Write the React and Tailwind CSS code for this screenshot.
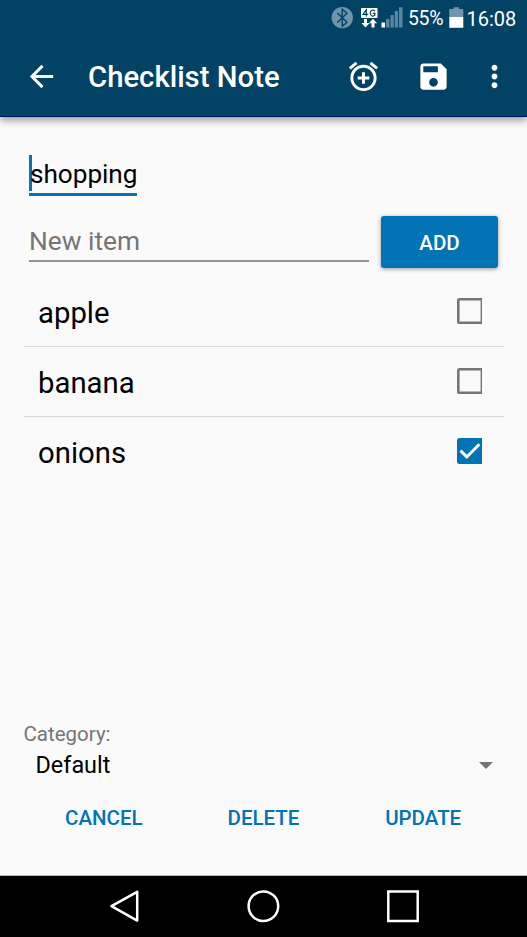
import React from "react";

function StatusBar() {
  return (
    <div className="flex h-9 items-center pl-[331px] text-white">
      <svg className="h-9 w-[76px] shrink-0" viewBox="331 0 76 36" fill="none">
        <circle cx="342.3" cy="17.6" r="10.7" fill="#7095ab" />
        <path d="M337.3 13L347 22.3L342.2 26.2V9.2L347 13.2L337.3 22.5" stroke="#024265" strokeWidth="1.4" />
        <rect x="361" y="8" width="16.5" height="10" rx="0.8" fill="#fff" />
        <path d="M366.3 16.5V9.8L363 14.4H368.2M374.8 11.2C373.8 9.7 370.2 9.6 370.2 13.1C370.2 16.6 373.6 16.6 374.9 15.2V13.3H372.6" stroke="#024265" strokeWidth="1.2" />
        <path d="M364 19H367V23H369.6L365.5 27.5L361.4 23H364ZM371.5 27.5V23.2H368.9L373 18.8L377.1 23.2H374.5V27.5Z" fill="#fff" />
        <path d="M381.5 22.5H385V27.5H381.5Z" fill="#fff" />
        <path d="M386 19H389.5V27.5H386ZM390.5 15H393.8V27.5H390.5ZM394.8 11H398V27.5H394.8ZM399 7.3H402.5V27.5H399Z" fill="#5b86a0" />
      </svg>
      <span className="w-[42px] shrink-0 whitespace-nowrap pl-px pt-px text-[19.5px] leading-9 tracking-[-0.35px]">55%</span>
      <svg className="h-9 w-4 shrink-0" viewBox="449 0 16 36">
        <path d="M453.5 7.3H459V9H463.3V17H449.3V9H453.5Z" fill="#7095ab" />
        <path d="M449.3 17H463.3V27.8H449.3Z" fill="#fff" />
      </svg>
      <span className="shrink-0 whitespace-nowrap pl-[1.5px] pt-px text-[20px] leading-9">16:08</span>
    </div>
  );
}

function AppBar() {
  return (
    <div className="flex h-20 items-center text-white">
      <svg className="ml-[23.5px] size-[35px] shrink-0" viewBox="0 0 24 24" fill="currentColor">
        <path d="M20 11H7.83l5.59-5.59L12 4l-8 8 8 8 1.41-1.41L7.83 13H20v-2z" />
      </svg>
      <h1 className="ml-[29.5px] w-[227.5px] shrink-0 whitespace-nowrap pt-[2px] text-[29.3px] font-medium leading-9">Checklist Note</h1>
      <svg className="ml-[30px] size-[35px] shrink-0" viewBox="0 0 24 24" fill="currentColor">
        <path d="M7.88 3.39L6.6 1.86 2 5.71l1.29 1.53 4.59-3.85zM22 5.72l-4.6-3.86-1.29 1.53 4.6 3.86L22 5.72zM12 4c-4.97 0-9 4.03-9 9s4.02 9 9 9c4.97 0 9-4.03 9-9s-4.03-9-9-9zm0 16c-3.87 0-7-3.13-7-7s3.13-7 7-7 7 3.13 7 7-3.13 7-7 7zm1-11h-2v3H8v2h3v3h2v-3h3v-2h-3V9z" />
      </svg>
      <svg className="ml-[35px] size-[35px] shrink-0" viewBox="0 0 24 24" fill="currentColor">
        <path d="M17 3H5c-1.11 0-2 .9-2 2v14c0 1.1.89 2 2 2h14c1.1 0 2-.9 2-2V7l-4-4zm-5 16c-1.66 0-3-1.34-3-3s1.34-3 3-3 3 1.34 3 3-1.34 3-3 3zm3-10H5V5h10v4z" />
      </svg>
      <svg className="ml-[26.5px] size-[35px] shrink-0" viewBox="0 0 24 24" fill="currentColor">
        <path d="M12 8c1.1 0 2-.9 2-2s-.9-2-2-2-2 .9-2 2 .9 2 2 2zm0 2c-1.1 0-2 .9-2 2s.9 2 2 2 2-.9 2-2-.9-2-2-2zm0 6c-1.1 0-2 .9-2 2s.9 2 2 2 2-.9 2-2-.9-2-2-2z" />
      </svg>
    </div>
  );
}

function Checkbox({ checked }) {
  return (
    <svg className="h-[26px] w-[25px] shrink-0" viewBox="0 0 25 26" fill="none">
      {checked ? (
        <>
          <path d="M25 0H2.5Q0 0 0 2.5V23.5Q0 26 2.5 26H25Z" fill="#0273b4" />
          <path d="M3.5 12.6L9.8 18.9L22.3 6.2" stroke="#fff" strokeWidth="2.9" />
        </>
      ) : (
        <>
          <path d="M25 1.3H2.6Q1.3 1.3 1.3 2.6V23.4Q1.3 24.7 2.6 24.7H25" stroke="#757575" strokeWidth="2.6" />
          <path d="M24.3 1V25" stroke="#757575" strokeWidth="1.4" />
        </>
      )}
    </svg>
  );
}

const items = [
  { name: "apple", checked: false },
  { name: "banana", checked: false },
  { name: "onions", checked: true },
];

export default function App() {
  return (
    <div className="flex h-[937px] w-[527px] flex-col overflow-hidden bg-[#fafafa] font-['Roboto',sans-serif] text-black">
      <header className="h-[117px] shrink-0 border-b border-[#00105c] bg-[#024265] shadow-[0_3px_8px_rgba(0,0,0,0.42)]">
        <StatusBar />
        <AppBar />
      </header>

      <main className="flex h-[759px] shrink-0 flex-col border-b border-[#b5bab9]">
        <div className="ml-[29px] mt-[38px] flex h-[41px] w-[108px] border-b-[3px] border-[#0273b4]">
          <div className="h-[36px] w-[3px] shrink-0 bg-[#0273b4]" />
          <span className="-ml-[2px] whitespace-nowrap text-[26.2px] leading-[39px] tracking-[-0.05px]">shopping</span>
        </div>

        <div className="mt-[19px] flex h-[53px] pl-[29px]">
          <div className="h-[47px] w-[340px] border-b-2 border-[#949494] text-[26.3px] leading-[53px] text-[#757575]">New item</div>
          <button className="ml-3 mt-[0.5px] h-[52.5px] w-[117px] rounded-[3px] bg-[#0273b4] pt-[3px] text-[20.5px] font-medium text-white shadow-[0_1px_4px_rgba(0,0,0,0.4)]">ADD</button>
        </div>

        <ul className="ml-[23.5px] mt-[9px] w-[480.5px]">
          {items.map((item) => (
            <li key={item.name} className="flex h-[70px] items-center justify-between border-b-[1.5px] border-[#d8d8d8] pb-[2px] pl-[14.5px] pr-[22px] last:border-transparent">
              <span className="pt-1 text-[29.3px] leading-[40px]">{item.name}</span>
              <Checkbox checked={item.checked} />
            </li>
          ))}
        </ul>

        <div className="mt-auto pl-[23.5px] text-[20.5px] leading-6 text-[#757575]">Category:</div>
        <div className="flex h-[38px] items-center pl-[35.5px] pr-[34px]">
          <span className="grow text-[23.4px] leading-8">Default</span>
          <svg className="h-[7px] w-[14px]" viewBox="0 0 14 7">
            <path d="M0 0H14L7 7Z" fill="#757575" />
          </svg>
        </div>
        <div className="mb-[40px] mt-[17px] grid h-[34px] grid-cols-3 px-6 text-[20.5px] font-medium text-[#0273b4]">
          <button>CANCEL</button>
          <button>DELETE</button>
          <button>UPDATE</button>
        </div>
      </main>

      <nav className="flex h-[61px] shrink-0 items-center bg-black pl-[109px]">
        <svg className="h-[61px] w-[311px]" viewBox="109 876 311 61" fill="none" stroke="#fff" strokeWidth="2.5">
          <path d="M137.2 891.8V920.6L111.5 906.2Z" strokeLinejoin="round" />
          <circle cx="263.4" cy="906.2" r="14.8" />
          <path d="M388.3 891.5H417.7V921H388.3Z" />
        </svg>
      </nav>
    </div>
  );
}
